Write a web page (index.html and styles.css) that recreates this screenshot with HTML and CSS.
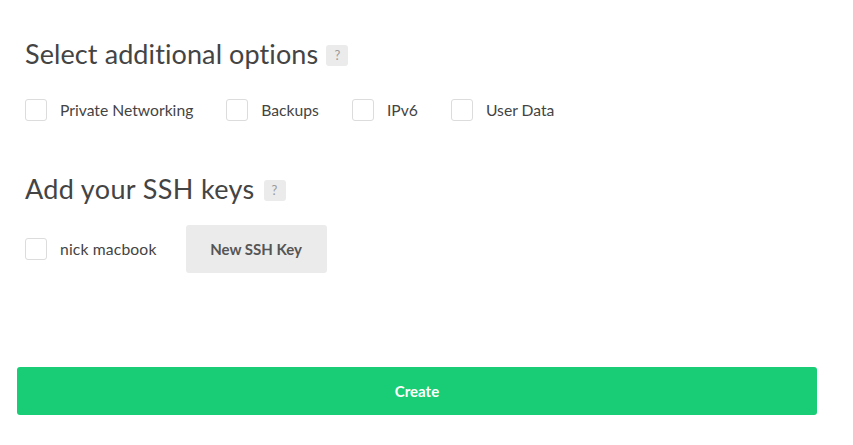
FILE: index.html
```html
<!DOCTYPE html>
<html>
<head>
<meta charset="utf-8">
<link rel="stylesheet" href="styles.css">
</head>
<body>
<div class="page">
  <section class="section options">
    <h2 class="heading">Select additional options <span class="help">?</span></h2>
    <div class="checks">
      <label class="check"><span class="box"></span><span class="label">Private Networking</span></label>
      <label class="check"><span class="box"></span><span class="label">Backups</span></label>
      <label class="check"><span class="box"></span><span class="label">IPv6</span></label>
      <label class="check"><span class="box"></span><span class="label">User Data</span></label>
    </div>
  </section>
  <section class="section keys">
    <h2 class="heading">Add your SSH keys <span class="help">?</span></h2>
    <div class="checks">
      <label class="check"><span class="box"></span><span class="label">nick macbook</span></label>
      <button class="btn-key">New SSH Key</button>
    </div>
  </section>
  <div class="create-wrap">
    <button class="btn-create">Create</button>
  </div>
</div>
</body>
</html>
```

FILE: styles.css
```css
html, body {
  margin: 0;
  padding: 0;
  background: #fff;
}
body {
  font-family: "Lato", "Open Sans", sans-serif;
  color: #444;
  width: 853px;
  height: 445px;
  overflow: hidden;
}
.page {
  padding-top: 36px;
}
.section {
  padding-left: 25px;
}
.heading {
  margin: 0;
  font-weight: 400;
  font-size: 27px;
  line-height: 36px;
  color: #444;
  display: flex;
  align-items: center;
  gap: 8px;
  letter-spacing: 0.1px;
}
.keys .heading {
  letter-spacing: 0.35px;
  gap: 9px;
}
.help {
  display: inline-flex;
  align-items: center;
  justify-content: center;
  width: 22px;
  height: 21px;
  background: #ebebeb;
  border-radius: 3px;
  font-size: 13px;
  color: #9a9a9a;
  margin-top: 2px;
  letter-spacing: 0;
}
.checks {
  display: flex;
  align-items: center;
  gap: 33px;
}
.options .checks {
  margin-top: 27px;
}
.keys {
  margin-top: 50px;
}
.keys .checks {
  margin-top: 18px;
  gap: 29px;
}
.check {
  display: flex;
  align-items: center;
  gap: 13px;
}
.box {
  width: 20px;
  height: 20px;
  border: 1px solid #dcdcdc;
  border-radius: 3px;
  background: #fff;
}
.label {
  font-size: 15.7px;
  color: #444;
}
.keys .label {
  letter-spacing: 0.15px;
}
.btn-key {
  width: 141px;
  height: 48px;
  border: none;
  border-radius: 3px;
  background: #ebebeb;
  color: #555;
  font-family: inherit;
  font-size: 15px;
  font-weight: 700;
}
.create-wrap {
  padding-left: 17px;
  margin-top: 94px;
}
.btn-create {
  width: 800px;
  height: 48px;
  border: none;
  border-radius: 3px;
  background: #18cd75;
  color: #fff;
  font-family: inherit;
  font-size: 15px;
  font-weight: 700;
}
```
